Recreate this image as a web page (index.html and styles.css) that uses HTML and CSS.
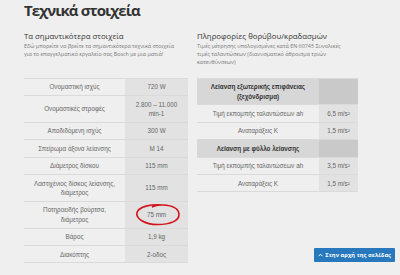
FILE: index.html
```html
<!DOCTYPE html>
<html lang="el">
<head>
<meta charset="utf-8">
<link rel="stylesheet" href="styles.css">
</head>
<body>
<div class="page">
  <h1 class="title">Τεχνικά στοιχεία</h1>
  <div class="grid">
    <div class="intro">
      <h2 class="subtitle">Τα σημαντικότερα στοιχεία</h2>
      <p class="desc">Εδώ μπορείτε να βρείτε τα σημαντικότερα τεχνικά στοιχεία<br>για το επαγγελματικό εργαλείο σας Bosch με μια ματιά!</p>
    </div>
    <div class="intro">
      <h2 class="subtitle">Πληροφορίες θορύβου/κραδασμών</h2>
      <p class="desc">Τιμές μέτρησης υπολογισμένες κατά EN 60745 Συνολικές<br>τιμές ταλαντώσεων (διανυσματικό άθροισμα τριών<br>κατευθύνσεων)</p>
    </div>
    <div class="spec spec-left">
      <div class="row"><div class="lbl">Ονομαστική ισχύς</div><div class="val">720 W</div></div>
      <div class="row"><div class="lbl">Ονομαστικές στροφές</div><div class="val">2.800 – 11.000<br>min-1</div></div>
      <div class="row"><div class="lbl">Αποδιδόμενη ισχύς</div><div class="val">300 W</div></div>
      <div class="row"><div class="lbl">Σπείρωμα άξονα λείανσης</div><div class="val">M 14</div></div>
      <div class="row"><div class="lbl">Διάμετρος δίσκου</div><div class="val">115 mm</div></div>
      <div class="row"><div class="lbl">Λαστιχένιος δίσκος λείανσης,<br>διάμετρος</div><div class="val">115 mm</div></div>
      <div class="row"><div class="lbl">Ποτηροειδής βούρτσα,<br>διάμετρος</div><div class="val mark">75 mm<svg class="circle" width="48" height="25" viewBox="0 0 48 25"><path d="M28 3 C17 2 5 4.5 3 10.5 C1.5 16.5 10.5 22.5 23.5 22.5 C36 22.5 45.5 19 45 12 C44.5 6.5 38 3.5 29 3 C24.5 2.8 20.5 3.6 18.5 4.8" fill="none" stroke="#d3141c" stroke-width="1.6" stroke-linecap="round"/></svg></div></div>
      <div class="row"><div class="lbl">Βάρος</div><div class="val">1,9 kg</div></div>
      <div class="row"><div class="lbl">Διακόπτης</div><div class="val">2-οδος</div></div>
    </div>
    <div class="right-col">
      <div class="spec spec-right">
        <div class="row head"><div class="lbl">Λείανση εξωτερικής επιφάνειας<br>(ξεχόνδρισμα)</div><div class="val"></div></div>
        <div class="row"><div class="lbl">Τιμή εκπομπής ταλαντώσεων ah</div><div class="val">6,5 m/s²</div></div>
        <div class="row"><div class="lbl">Αναταράξεις K</div><div class="val">1,5 m/s²</div></div>
        <div class="row head"><div class="lbl">Λείανση με φύλλο λείανσης</div><div class="val"></div></div>
        <div class="row"><div class="lbl">Τιμή εκπομπής ταλαντώσεων ah</div><div class="val">3,5 m/s²</div></div>
        <div class="row"><div class="lbl">Αναταράξεις K</div><div class="val">1,5 m/s²</div></div>
      </div>
      <div class="footer">
        <a class="top-btn" href="#"><svg class="chev" width="5" height="4" viewBox="0 0 5 4"><path d="M0.6 3.2 L2.5 1.1 L4.4 3.2" fill="none" stroke="#fff" stroke-width="0.9"/></svg>Στην αρχή της σελίδας</a>
      </div>
    </div>
  </div>
</div>
</body>
</html>
```

FILE: styles.css
```css
html, body {
  margin: 0;
  padding: 0;
  background: #efefef;
}
body {
  font-family: "Liberation Sans", "Open Sans", sans-serif;
  color: #555;
  width: 400px;
  height: 275px;
  overflow: hidden;
}
.page {
  padding: 0 5px 0 24px;
}
.title {
  margin: 0;
  padding-top: 1px;
  font-family: "Open Sans", sans-serif;
  font-size: 15px;
  line-height: 18px;
  font-weight: 700;
  letter-spacing: -0.9px;
  color: #333;
}
.grid {
  display: grid;
  grid-template-columns: 164px 1fr;
  column-gap: 9px;
  margin-top: 12px;
}
.intro {
  padding-bottom: 11px;
}
.subtitle {
  margin: 0;
  font-family: "Open Sans", sans-serif;
  font-weight: 400;
  font-size: 7.8px;
  line-height: 11px;
  color: #333;
}
.desc {
  margin: 0;
  font-family: "Open Sans", sans-serif;
  font-size: 5.4px;
  line-height: 8.2px;
  color: #777;
  white-space: nowrap;
}
.spec {
  font-size: 6.3px;
  line-height: 9.4px;
  color: #666;
  border-bottom: 1px solid #dadada;
  align-self: start;
}
.row {
  display: grid;
  border-top: 1px solid #dadada;
}
.spec-left {
  width: 164px;
}
.spec-left .row {
  grid-template-columns: 101px 63px;
}
.spec-right {
  width: 161px;
}
.spec-right .row {
  grid-template-columns: 122px 39px;
}
.lbl, .val {
  display: flex;
  align-items: center;
  justify-content: center;
  text-align: center;
  padding: 3.5px 2px;
  white-space: nowrap;
}
.lbl {
  background: #efefef;
}
.val {
  background: #e2e2e2;
}
.head .lbl {
  background: #d7d7d7;
  font-weight: 700;
  color: #333;
}
.head .val {
  background: #c9c9c9;
}
.mark {
  position: relative;
}
.circle {
  position: absolute;
  left: 9px;
  top: 0;
}
.right-col {
  display: flex;
  flex-direction: column;
}
.footer {
  margin-top: auto;
  margin-bottom: 1px;
  display: flex;
  justify-content: flex-end;
}
.top-btn {
  display: flex;
  align-items: center;
  gap: 2px;
  height: 14px;
  padding: 0 4px;
  background: #2878bd;
  color: #fff;
  text-decoration: none;
  font-family: "Open Sans", sans-serif;
  font-weight: 700;
  font-size: 5.6px;
  letter-spacing: 0.1px;
  border-radius: 1px;
}
```
